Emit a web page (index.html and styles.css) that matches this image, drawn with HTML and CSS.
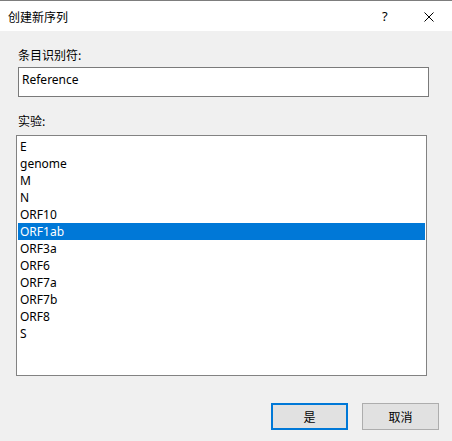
FILE: index.html
```html
<!DOCTYPE html>
<html>
<head>
<meta charset="utf-8">
<link rel="stylesheet" href="styles.css">
</head>
<body>
<div class="dialog">
  <div class="titlebar">
    <span class="title">创建新序列</span>
    <span class="help">?</span>
    <span class="close">
      <svg width="10" height="10" viewBox="0 0 10 10"><path d="M0.5 0.5 L9.5 9.5 M9.5 0.5 L0.5 9.5" stroke="#000" stroke-width="1" fill="none"/></svg>
    </span>
  </div>
  <div class="content">
    <div class="label label-id">条目识别符:</div>
    <div class="textbox">Reference</div>
    <div class="label label-exp">实验:</div>
    <div class="listbox">
      <div class="item">E</div>
      <div class="item">genome</div>
      <div class="item">M</div>
      <div class="item">N</div>
      <div class="item">ORF10</div>
      <div class="item selected">ORF1ab</div>
      <div class="item">ORF3a</div>
      <div class="item">ORF6</div>
      <div class="item">ORF7a</div>
      <div class="item">ORF7b</div>
      <div class="item">ORF8</div>
      <div class="item">S</div>
    </div>
    <div class="buttons">
      <div class="btn default">是</div>
      <div class="btn">取消</div>
    </div>
  </div>
</div>
</body>
</html>
```
FILE: styles.css
```css
html, body {
  margin: 0;
  padding: 0;
  background: #f0f0f0;
}
body {
  font-family: "Noto Sans", "Noto Sans CJK SC", sans-serif;
  font-size: 12px;
  color: #000;
}
.dialog {
  width: 452px;
  height: 441px;
  display: flex;
  flex-direction: column;
}
.titlebar {
  height: 30px;
  border-top: 1px solid #7d7d7d;
  background: #fff;
  display: flex;
  align-items: center;
  font-family: "Noto Sans CJK SC", sans-serif;
}
.title {
  margin-left: 8px;
  font-size: 12px;
  flex: 1;
}
.help {
  font-family: "Noto Sans", sans-serif;
  font-size: 13px;
  width: 12px;
  margin-right: 30px;
}
.close {
  display: flex;
  margin-right: 18px;
  margin-top: 1px;
}
.content {
  display: flex;
  flex-direction: column;
}
.label {
  font-family: "Noto Sans CJK SC", sans-serif;
  height: 16px;
  line-height: 16px;
  margin-left: 18px;
}
.label-id {
  margin-top: 16px;
}
.textbox {
  margin-top: 4px;
  margin-left: 18px;
  width: 406px;
  height: 28px;
  border: 1px solid #7a7a7a;
  background: #fff;
  padding-left: 3px;
  line-height: 24px;
}
.label-exp {
  margin-top: 16px;
}
.listbox {
  margin-top: 6px;
  margin-left: 16px;
  width: 407px;
  height: 237px;
  border: 1px solid #828282;
  background: #fff;
  padding: 2px 1px 0 1px;
}
.item {
  height: 17px;
  line-height: 17px;
  padding-left: 2px;
}
.item.selected {
  background: #0078d7;
  color: #fff;
}
.buttons {
  display: flex;
  justify-content: flex-end;
  gap: 14px;
  margin-top: 27px;
  margin-right: 13px;
}
.btn {
  width: 75px;
  height: 25px;
  border: 1px solid #adadad;
  background: #e1e1e1;
  display: flex;
  align-items: center;
  justify-content: center;
  font-family: "Noto Sans CJK SC", sans-serif;
  font-size: 12px;
}
.btn.default {
  width: 73px;
  height: 23px;
  border: 2px solid #0078d7;
}
```
